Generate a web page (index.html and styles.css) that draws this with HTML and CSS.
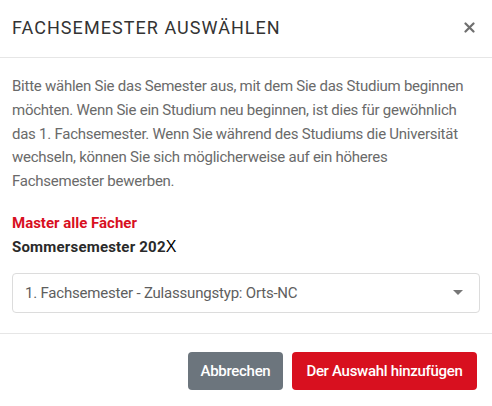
FILE: index.html
```html
<!DOCTYPE html>
<html lang="de">
<head>
<meta charset="utf-8">
<link rel="stylesheet" href="styles.css">
</head>
<body>
<div class="modal">
  <div class="modal-header">
    <h2 class="modal-title">FACHSEMESTER AUSWÄHLEN</h2>
    <button class="close" type="button" aria-label="Schließen">
      <svg width="11" height="11" viewBox="0 0 11 11"><path d="M1.5 1.5l8 8M9.5 1.5l-8 8" stroke="#6f6f6f" stroke-width="2.2" stroke-linecap="round"/></svg>
    </button>
  </div>
  <div class="modal-body">
    <p class="intro">Bitte wählen Sie das Semester aus, mit dem Sie das Studium beginnen möchten. Wenn Sie ein Studium neu beginnen, ist dies für gewöhnlich das 1. Fachsemester. Wenn Sie während des Studiums die Universität wechseln, können Sie sich möglicherweise auf ein höheres Fachsemester bewerben.</p>
    <div class="course">Master alle Fächer</div>
    <div class="term">Sommersemester 202<span class="term-x">X</span></div>
    <div class="select">
      <span class="select-text">1. Fachsemester - Zulassungstyp: Orts-NC</span>
      <span class="caret"></span>
    </div>
  </div>
  <div class="modal-footer">
    <button class="btn btn-secondary" type="button">Abbrechen</button>
    <button class="btn btn-primary" type="button">Der Auswahl hinzufügen</button>
  </div>
</div>
</body>
</html>
```

FILE: styles.css
```css
html, body {
  margin: 0;
  padding: 0;
  background: #fff;
}
body {
  font-family: Roboto, "Liberation Sans", sans-serif;
  color: #666;
}
.modal {
  width: 492px;
  display: flex;
  flex-direction: column;
}
.modal-header {
  height: 58px;
  box-sizing: border-box;
  border-bottom: 1px solid #e6e6e6;
  display: flex;
  align-items: center;
  justify-content: space-between;
  padding: 0 17px 2px 12px;
}
.modal-title {
  margin: 0;
  font-size: 18px;
  font-weight: 400;
  color: #333;
  letter-spacing: 1.05px;
}
.close {
  border: 0;
  background: none;
  padding: 0;
  display: flex;
  cursor: pointer;
}
.modal-body {
  padding: 17px 12px 20px 12px;
  border-bottom: 1px solid #e6e6e6;
}
.intro {
  margin: 0 0 18px;
  font-size: 15px;
  line-height: 23.8px;
  color: #6a6a6a;
  letter-spacing: -0.25px;
}
.course {
  font-size: 15px;
  font-weight: 700;
  line-height: 23px;
  color: #d8101f;
}
.term {
  font-size: 15px;
  font-weight: 700;
  line-height: 23px;
  color: #2a2a2a;
  letter-spacing: 0.2px;
}
.term-x {
  font-family: "Liberation Sans", sans-serif;
  font-weight: 400;
  color: #000;
  font-size: 16px;
}
.select {
  margin-top: 14px;
  height: 40px;
  box-sizing: border-box;
  border: 1px solid #dcdcdc;
  border-radius: 4px;
  display: flex;
  align-items: center;
  justify-content: space-between;
  padding: 0 16px 0 12px;
}
.select-text {
  font-size: 15px;
  color: #5e5e5e;
  letter-spacing: -0.2px;
}
.caret {
  width: 0;
  height: 0;
  border-left: 5px solid transparent;
  border-right: 5px solid transparent;
  border-top: 5px solid #777;
}
.modal-footer {
  display: flex;
  justify-content: flex-end;
  gap: 9px;
  padding: 18px 15px 17px 12px;
}
.btn {
  height: 38px;
  border: 0;
  border-radius: 4px;
  font-family: Roboto, "Liberation Sans", sans-serif;
  font-size: 15px;
  font-weight: 500;
  color: #fff;
  padding: 0 12px;
  letter-spacing: -0.3px;
}
.btn-secondary {
  background: #6c757d;
  width: 95px;
}
.btn-primary {
  background: #d8101f;
  width: 185px;
}
```
